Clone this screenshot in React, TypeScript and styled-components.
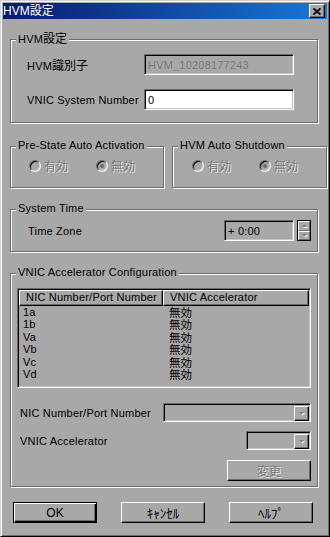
import styled, { createGlobalStyle } from 'styled-components'

const BG = '#a8a8a8'
const SHADOW = '#6c6c6c'
const DARK = '#000'
const LIGHT = '#fff'
const DISABLED = '#7a7a7a'

const GlobalStyle = createGlobalStyle`
  html, body {
    margin: 0;
    padding: 0;
    background: ${BG};
  }
  body {
    font-family: "Liberation Sans", "Noto Sans CJK JP", sans-serif;
    font-size: 11px;
    letter-spacing: 0.2px;
    color: #000;
  }
  * {
    box-sizing: border-box;
  }
`

const Window = styled.div`
  width: 330px;
  height: 537px;
  background: ${BG};
  border: 1px solid;
  border-color: #d0d0d0 ${DARK} ${DARK} #d0d0d0;
  box-shadow: inset 1px 1px 0 ${LIGHT}, inset -1px -1px 0 ${SHADOW};
  padding: 2px;
  display: flex;
  flex-direction: column;
`

const TitleBar = styled.div`
  height: 16px;
  display: flex;
  align-items: center;
  justify-content: space-between;
  padding: 0 2px 0 0;
  background: linear-gradient(to right, #081a6c, #1878d8);
  color: #fff;
`

const Title = styled.span`
  font-size: 12px;
  letter-spacing: 0;
  line-height: 16px;
`

const CloseButton = styled.button`
  width: 16px;
  height: 14px;
  padding: 0;
  background: ${BG};
  border: 1px solid;
  border-color: ${LIGHT} ${DARK} ${DARK} ${LIGHT};
  box-shadow: inset -1px -1px 0 ${SHADOW};
  display: flex;
  align-items: center;
  justify-content: center;
`

const Jp = styled.span<{ $size?: number }>`
  font-family: "Noto Sans CJK JP", sans-serif;
  font-size: ${(p) => p.$size ?? 12}px;
  letter-spacing: 0;
`

const Body = styled.div`
  flex: 1;
  display: flex;
  flex-direction: column;
  padding: 20px 9px 0 7px;
`

const Group = styled.div<{ $pad: string; $h?: number; $mt?: number }>`
  position: relative;
  border: 1px solid ${SHADOW};
  box-shadow: 1px 1px 0 ${LIGHT}, inset 1px 1px 0 ${LIGHT};
  padding: ${(p) => p.$pad};
  margin-top: ${(p) => p.$mt ?? 0}px;
  ${(p) => (p.$h ? `height: ${p.$h}px;` : '')}
`

const Caption = styled.span`
  position: absolute;
  top: -9px;
  left: 5px;
  padding: 0 2px;
  background: ${BG};
  line-height: 14px;
  white-space: nowrap;
`

const FieldStack = styled.div`
  display: flex;
  flex-direction: column;
  gap: 14px;
`

const FieldRow = styled.div`
  display: grid;
  grid-template-columns: 117px 150px;
  align-items: center;
`

const TextField = styled.input<{ $w?: number }>`
  width: ${(p) => p.$w ?? 150}px;
  height: 21px;
  margin: 0;
  padding: 0 3px;
  border: 1px solid;
  border-color: ${SHADOW} ${LIGHT} ${LIGHT} ${SHADOW};
  box-shadow: inset 1px 1px 0 ${DARK}, inset -1px -1px 0 #c4c4c4;
  background: #fff;
  font: inherit;
  letter-spacing: inherit;
  color: #000;
  outline: none;

  &:read-only {
    background: ${BG};
  }
  &:disabled {
    background: ${BG};
    color: ${DISABLED};
  }
`

const PairRow = styled.div`
  display: grid;
  grid-template-columns: 1fr 1fr;
  gap: 8px;
  margin-top: 23px;
`

const RadioRow = styled.div`
  display: flex;
  align-items: center;
  height: 14px;
`

const RadioOption = styled.label`
  width: 67px;
  display: flex;
  align-items: center;
  gap: 3px;
  color: ${DISABLED};
  text-shadow: 1px 1px 0 #e4e4e4;
  line-height: 14px;
`

const RadioCircle = styled.span<{ $checked?: boolean }>`
  width: 12px;
  height: 12px;
  border-radius: 50%;
  border: 1px solid;
  border-color: ${SHADOW} ${LIGHT} ${LIGHT} ${SHADOW};
  box-shadow: inset 1px 1px 0 ${DARK}, inset -1px -1px 0 #c4c4c4;
  background: ${BG};
  display: flex;
  align-items: center;
  justify-content: center;

  &::after {
    content: '';
    width: 4px;
    height: 4px;
    border-radius: 50%;
    background: ${(p) => (p.$checked ? SHADOW : 'transparent')};
  }
`

const TimeRow = styled.div`
  display: flex;
  align-items: center;
`

const Label = styled.span`
  flex: 1;
  white-space: nowrap;
`

const Spinner = styled.div`
  width: 14px;
  height: 21px;
  margin-left: 3px;
  display: flex;
  flex-direction: column;
  border: 1px solid ${DARK};
`

const SpinButton = styled.span`
  flex: 1;
  background: ${BG};
  border: 1px solid;
  border-color: ${LIGHT} ${SHADOW} ${SHADOW} ${LIGHT};
  display: flex;
  align-items: center;
  justify-content: center;
`

const ListView = styled.div`
  height: 100px;
  border: 1px solid;
  border-color: ${SHADOW} ${LIGHT} ${LIGHT} ${SHADOW};
  box-shadow: inset 1px 1px 0 ${DARK}, inset -1px -1px 0 #c4c4c4;
  padding: 1px;
  background: ${BG};
`

const ListHeader = styled.div`
  display: grid;
  grid-template-columns: 144px 1fr;
  height: 16px;
`

const HeaderCell = styled.div`
  border: 1px solid;
  border-color: ${LIGHT} ${DARK} ${DARK} ${LIGHT};
  box-shadow: inset -1px -1px 0 ${SHADOW};
  padding-left: 6px;
  line-height: 13px;
  white-space: nowrap;
`

const ListRow = styled.div`
  display: grid;
  grid-template-columns: 144px 1fr;
  height: 12.4px;
  line-height: 12.4px;
`

const Cell = styled.span<{ $pl: number }>`
  padding-left: ${(p) => p.$pl}px;
`

const FormRow = styled.div<{ $mt: number }>`
  display: flex;
  align-items: center;
  padding-left: 3px;
  margin-top: ${(p) => p.$mt}px;
`

const Combo = styled.div<{ $w: number }>`
  width: ${(p) => p.$w}px;
  height: 19px;
  border: 1px solid;
  border-color: ${SHADOW} ${LIGHT} ${LIGHT} ${SHADOW};
  box-shadow: inset 1px 1px 0 ${DARK}, inset -1px -1px 0 #c4c4c4;
  background: ${BG};
  padding: 2px 1px 2px 2px;
  display: flex;
  justify-content: flex-end;
`

const DropButton = styled.span`
  width: 15px;
  height: 15px;
  background: ${BG};
  border: 1px solid;
  border-color: ${LIGHT} ${DARK} ${DARK} ${LIGHT};
  box-shadow: inset -1px -1px 0 ${SHADOW};
  display: flex;
  align-items: center;
  justify-content: center;
`

const ChangeRow = styled.div`
  display: flex;
  justify-content: flex-end;
  margin-top: 10px;
  padding-right: 0;
`

const Button = styled.button<{ $default?: boolean }>`
  width: 84px;
  height: 21px;
  margin: 0;
  padding: 0;
  background: ${BG};
  border: 1px solid;
  border-color: ${(p) => (p.$default ? `${DARK}` : `${LIGHT} ${DARK} ${DARK} ${LIGHT}`)};
  box-shadow: ${(p) =>
    p.$default
      ? `inset 1px 1px 0 ${LIGHT}, inset -1px -1px 0 ${DARK}, inset -2px -2px 0 ${SHADOW}`
      : `inset -1px -1px 0 ${SHADOW}`};
  font: inherit;
  font-size: 12px;
  letter-spacing: 0;
  color: #000;

  &:disabled {
    color: ${DISABLED};
    text-shadow: 1px 1px 0 #e4e4e4;
  }
`

const Footer = styled.div`
  display: flex;
  justify-content: space-between;
  padding: 0 5px 0 3px;
  margin-top: 15px;
`

const Arrow = ({ up }: { up?: boolean }) => (
  <svg width="7" height="5" viewBox="0 0 7 5">
    <polygon
      points={up ? '1,4 6,4 3.5,1.5' : '1,1 6,1 3.5,3.5'}
      fill="#fff"
      transform="translate(1,1)"
    />
    <polygon points={up ? '1,4 6,4 3.5,1.5' : '1,1 6,1 3.5,3.5'} fill={DISABLED} />
  </svg>
)

const CloseIcon = () => (
  <svg width="8" height="7" viewBox="0 0 8 7">
    <path d="M0.5 0.5 L7.5 6.5 M7.5 0.5 L0.5 6.5" stroke="#000" strokeWidth="1.8" />
  </svg>
)

const rows = ['1a', '1b', 'Va', 'Vb', 'Vc', 'Vd']

function App() {
  return (
    <>
      <GlobalStyle />
      <Window>
        <TitleBar>
          <Title>HVM設定</Title>
          <CloseButton aria-label="close">
            <CloseIcon />
          </CloseButton>
        </TitleBar>
        <Body>
          <Group $pad="14px 0 12px 16px">
            <Caption>
              HVM<Jp>設定</Jp>
            </Caption>
            <FieldStack>
              <FieldRow>
                <span>
                  HVM<Jp>識別子</Jp>
                </span>
                <TextField disabled defaultValue="HVM_10208177243" />
              </FieldRow>
              <FieldRow>
                <span>VNIC System Number</span>
                <TextField defaultValue="0" />
              </FieldRow>
            </FieldStack>
          </Group>

          <PairRow>
            <Group $pad="12px 0 0 18px" $h={42}>
              <Caption>Pre-State Auto Activation</Caption>
              <RadioRow>
                <RadioOption>
                  <RadioCircle />
                  <Jp>有効</Jp>
                </RadioOption>
                <RadioOption>
                  <RadioCircle $checked />
                  <Jp>無効</Jp>
                </RadioOption>
              </RadioRow>
            </Group>
            <Group $pad="12px 0 0 19px" $h={42}>
              <Caption>HVM Auto Shutdown</Caption>
              <RadioRow>
                <RadioOption>
                  <RadioCircle />
                  <Jp>有効</Jp>
                </RadioOption>
                <RadioOption>
                  <RadioCircle $checked />
                  <Jp>無効</Jp>
                </RadioOption>
              </RadioRow>
            </Group>
          </PairRow>

          <Group $pad="10px 6px 0 17px" $h={43} $mt={21}>
            <Caption>System Time</Caption>
            <TimeRow>
              <Label>Time Zone</Label>
              <TextField $w={70} readOnly defaultValue="+ 0:00" />
              <Spinner>
                <SpinButton>
                  <Arrow up />
                </SpinButton>
                <SpinButton>
                  <Arrow />
                </SpinButton>
              </Spinner>
            </TimeRow>
          </Group>

          <Group $pad="14px 6px 0 6px" $h={214} $mt={21}>
            <Caption>VNIC Accelerator Configuration</Caption>
            <ListView>
              <ListHeader>
                <HeaderCell>NIC Number/Port Number</HeaderCell>
                <HeaderCell>VNIC Accelerator</HeaderCell>
              </ListHeader>
              {rows.map((r) => (
                <ListRow key={r}>
                  <Cell $pl={4}>{r}</Cell>
                  <Cell $pl={6}>
                    <Jp $size={11.5}>無効</Jp>
                  </Cell>
                </ListRow>
              ))}
            </ListView>
            <FormRow $mt={15}>
              <Label>NIC Number/Port Number</Label>
              <Combo $w={148}>
                <DropButton>
                  <Arrow />
                </DropButton>
              </Combo>
            </FormRow>
            <FormRow $mt={9}>
              <Label>VNIC Accelerator</Label>
              <Combo $w={65}>
                <DropButton>
                  <Arrow />
                </DropButton>
              </Combo>
            </FormRow>
            <ChangeRow>
              <Button disabled>
                <Jp>変更</Jp>
              </Button>
            </ChangeRow>
          </Group>

          <Footer>
            <Button $default>OK</Button>
            <Button>
              <Jp $size={13}>ｷｬﾝｾﾙ</Jp>
            </Button>
            <Button>
              <Jp $size={13}>ﾍﾙﾌﾟ</Jp>
            </Button>
          </Footer>
        </Body>
      </Window>
    </>
  )
}

export default App
